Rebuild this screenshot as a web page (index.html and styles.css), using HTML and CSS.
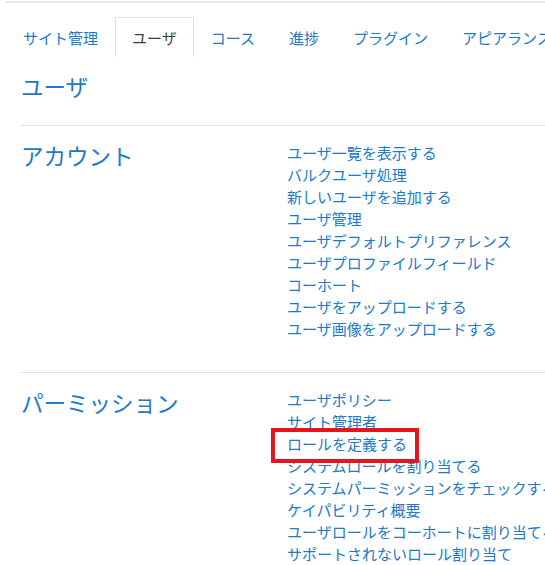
FILE: index.html
```html
<!DOCTYPE html>
<html lang="ja">
<head>
<meta charset="utf-8">
<link rel="stylesheet" href="styles.css">
</head>
<body>
<div class="page">
  <div class="topline"></div>
  <ul class="tabs">
    <li class="tab"><a>サイト管理</a></li>
    <li class="tab active"><a>ユーザ</a></li>
    <li class="tab"><a>コース</a></li>
    <li class="tab"><a>進捗</a></li>
    <li class="tab"><a>プラグイン</a></li>
    <li class="tab"><a>アピアランス</a></li>
    <li class="tab"><a>サーバ</a></li>
  </ul>
  <div class="content">
    <h2 class="title">ユーザ</h2>
    <section class="group">
      <h3 class="group-title">アカウント</h3>
      <ul class="links">
        <li><a>ユーザ一覧を表示する</a></li>
        <li><a>バルクユーザ処理</a></li>
        <li><a>新しいユーザを追加する</a></li>
        <li><a>ユーザ管理</a></li>
        <li><a>ユーザデフォルトプリファレンス</a></li>
        <li><a>ユーザプロファイルフィールド</a></li>
        <li><a>コーホート</a></li>
        <li><a>ユーザをアップロードする</a></li>
        <li><a>ユーザ画像をアップロードする</a></li>
      </ul>
    </section>
    <section class="group">
      <h3 class="group-title">パーミッション</h3>
      <ul class="links">
        <li><a>ユーザポリシー</a></li>
        <li><a>サイト管理者</a></li>
        <li><a class="marked">ロールを定義する</a></li>
        <li><a>システムロールを割り当てる</a></li>
        <li><a>システムパーミッションをチェックする</a></li>
        <li><a>ケイパビリティ概要</a></li>
        <li><a>ユーザロールをコーホートに割り当てる</a></li>
        <li><a>サポートされないロール割り当て</a></li>
      </ul>
    </section>
  </div>
</div>
</body>
</html>
```
FILE: styles.css
```css
html, body {
  margin: 0;
  padding: 0;
  background: #fff;
}
body {
  width: 545px;
  height: 565px;
  overflow: hidden;
  font-family: "Noto Sans CJK JP", "Noto Sans", sans-serif;
  color: #2079c9;
}
.page {
  width: 900px;
  padding-left: 6px;
}
.topline {
  margin-top: 1px;
  height: 2px;
  background: #e6e6e6;
}
.tabs {
  list-style: none;
  margin: 14px 0 0;
  padding: 0;
  display: flex;
  border-bottom: 1px solid #dee2e6;
}
.tab {
  border: 1px solid transparent;
  border-bottom: none;
  margin-bottom: -1px;
  padding: 0 16px;
  height: 39px;
  line-height: 40px;
  font-size: 15px;
  white-space: nowrap;
  background: #fff;
}
.tab.active {
  border-color: #dee2e6;
  color: #3a3c3e;
}
.content {
  padding-left: 15px;
}
.title {
  margin: 14px 0 0;
  font-weight: normal;
  font-size: 22.5px;
  line-height: 30px;
  padding-bottom: 24px;
}
.group {
  border-top: 1px solid #dee2e6;
  display: flex;
  align-items: flex-start;
  padding: 16px 0 32px;
}
.group-title {
  margin: 0;
  width: 266px;
  flex: none;
  font-weight: normal;
  font-size: 22.5px;
  line-height: 26px;
}
.links {
  list-style: none;
  margin: 0;
  padding: 0;
  font-size: 15px;
  line-height: 22px;
  white-space: nowrap;
}
.marked {
  position: relative;
}
.marked::after {
  content: "";
  position: absolute;
  left: -16px;
  top: -5px;
  width: 140px;
  height: 27px;
  border: 4px solid #e8141c;
}
```
